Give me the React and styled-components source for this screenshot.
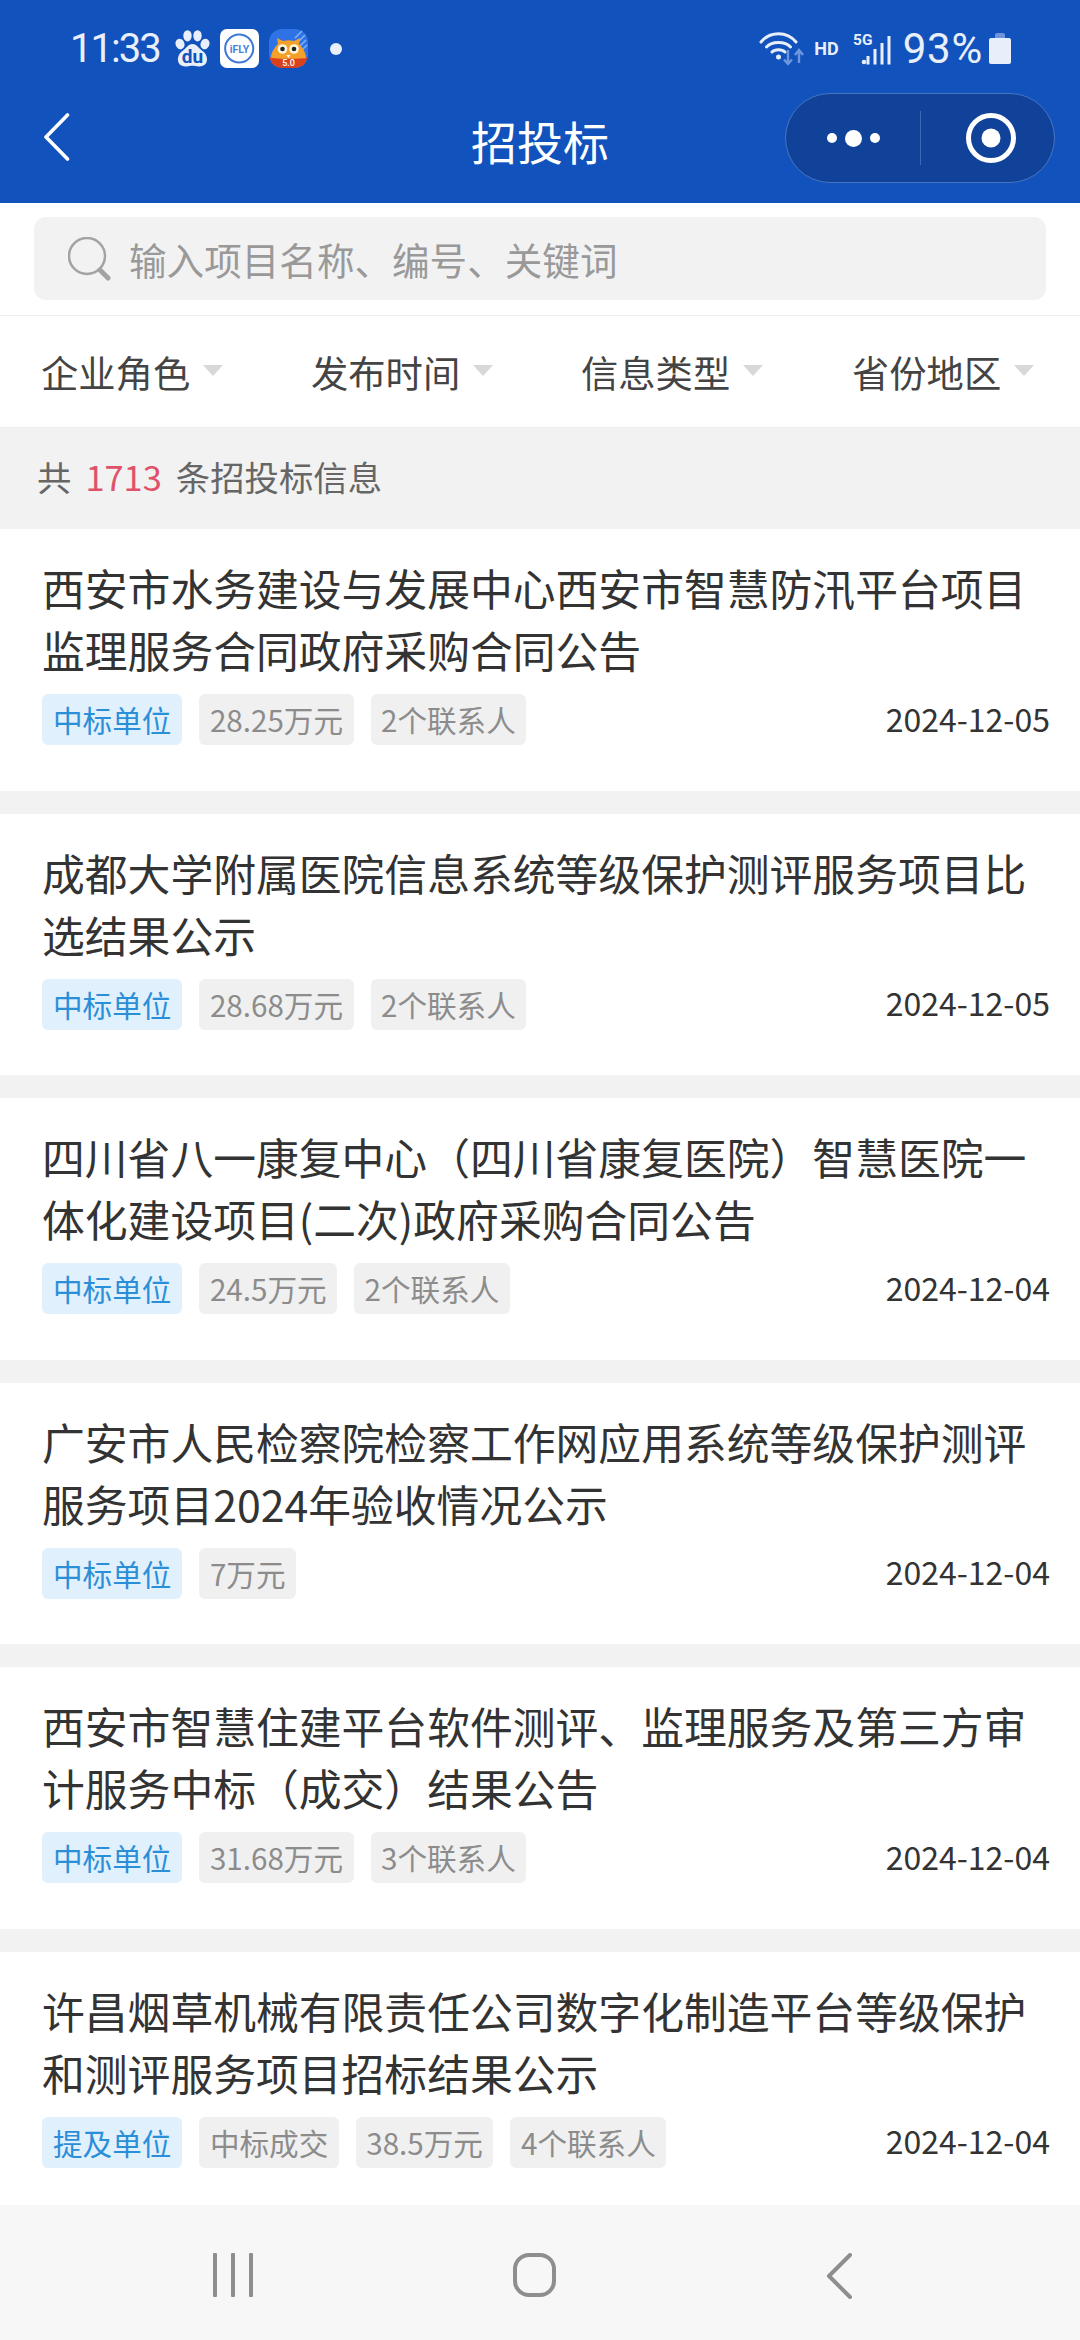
import React from 'react'
import styled, { createGlobalStyle } from 'styled-components'

const GlobalStyle = createGlobalStyle`
    html, body {
        margin: 0;
        padding: 0;
        background: #fff;
    }
    * {
        box-sizing: border-box;
    }
`

const Page = styled.div`
    width: 1080px;
    height: 2340px;
    display: flex;
    flex-direction: column;
    overflow: hidden;
    background: #fff;
    font-family: "Noto Sans CJK SC", "Noto Sans", sans-serif;
`

const Header = styled.header`
    height: 203px;
    flex: none;
    background: #1152bc;
    color: #fff;
`

const StatusBar = styled.div`
    height: 91px;
    padding: 6px 69px 0 70px;
    display: flex;
    align-items: center;
    justify-content: space-between;
    color: #e9effa;
    font-family: Roboto, sans-serif;
`

const StatusGroup = styled.div`
    display: flex;
    align-items: center;
`

const AppIcons = styled.div`
    display: flex;
    align-items: center;
    gap: 10px;
    margin: 0 22px 0 15px;
`

const Clock = styled.span`
    font-size: 40px;
    line-height: 48px;
    letter-spacing: -2px;
`

const Battery = styled.span`
    font-size: 42px;
    line-height: 48px;
    letter-spacing: 0.8px;
    margin: 0 6px 0 11px;
`

const NetworkLabel = styled.span`
    font-size: 18px;
    font-weight: 700;
    margin: 0 14px 0 9px;
`

const StatusDot = styled.span`
    width: 12px;
    height: 12px;
    border-radius: 50%;
    background: #e9effa;
`

const NavBar = styled.div`
    height: 112px;
    padding: 2px 25px 0 44px;
    display: flex;
    align-items: flex-start;
    justify-content: space-between;
    position: relative;
`

const BackButton = styled.div`
    margin-top: 20px;
    line-height: 0;
`

const NavTitle = styled.div`
    position: absolute;
    left: 0;
    right: 0;
    top: 16px;
    text-align: center;
    font-size: 46px;
    line-height: 66px;
`

const Capsule = styled.div`
    width: 270px;
    height: 90px;
    display: flex;
    align-items: center;
    background: #10429a;
    border: 1px solid #4a74c0;
    border-radius: 45px;
`

const CapsuleMenu = styled.div`
    width: 135px;
    height: 54px;
    display: flex;
    align-items: center;
    justify-content: center;
    gap: 8px;
    border-right: 1px solid #3d68b3;
`

const CapsuleClose = styled.div`
    width: 133px;
    padding-left: 6px;
    display: flex;
    align-items: center;
    justify-content: center;
`

const Dot = styled.span`
    width: ${p => p.$size}px;
    height: ${p => p.$size}px;
    border-radius: 50%;
    background: #fff;
`

const SearchRow = styled.div`
    height: 113px;
    flex: none;
    padding: 14px 34px 0 34px;
    border-bottom: 1px solid #eeeeee;
`

const SearchBox = styled.div`
    height: 83px;
    padding-left: 34px;
    display: flex;
    align-items: center;
    gap: 18px;
    background: #f2f2f3;
    border-radius: 12px;
    color: #999;
    font-size: 37.6px;
`

const FilterRow = styled.div`
    height: 112px;
    flex: none;
    display: grid;
    grid-template-columns: 270px 270px 271px 1fr;
    padding-left: 41px;
    border-bottom: 1px solid #eeeeee;
`

const Filter = styled.div`
    display: flex;
    align-items: center;
    gap: 13px;
    color: #444;
    font-size: 37.3px;
`

const Caret = styled.span`
    width: 0;
    height: 0;
    margin-top: -2px;
    border-left: 10px solid transparent;
    border-right: 10px solid transparent;
    border-top: 11px solid #d8d8d8;
`

const CountBar = styled.div`
    height: 101px;
    flex: none;
    padding: 0 0 6px 37px;
    display: flex;
    align-items: center;
    gap: 14px;
    background: #f2f2f3;
    color: #666;
    font-size: 34.4px;
`

const Count = styled.span`
    color: #e0526a;
`

const List = styled.div`
    flex: 1;
    min-height: 0;
    overflow: hidden;
    display: flex;
    flex-direction: column;
    gap: 23px;
    background: #f2f2f3;
`

const Card = styled.div`
    flex: none;
    height: 261.5px;
    padding: 27px 30px 0 42px;
    background: #fff;
`

const CardTitle = styled.div`
    color: #333;
    font-size: 42.8px;
    line-height: 62px;
    height: 124px;
    overflow: hidden;
`

const CardFoot = styled.div`
    margin-top: 14px;
    display: flex;
    align-items: center;
    justify-content: space-between;
`

const Tags = styled.div`
    display: flex;
    gap: 17px;
`

const Tag = styled.span`
    height: 51px;
    padding: 0 ${p => (p.$primary ? 11 : 10.5)}px;
    display: flex;
    align-items: center;
    border-radius: 6px;
    font-size: 29.6px;
    background: ${p => (p.$primary ? '#e1f0fd' : '#f0f0f0')};
    color: ${p => (p.$primary ? '#2b8fd8' : '#8c8c8c')};
`

const PubDate = styled.span`
    margin-top: -4px;
    color: #333;
    font-size: 32px;
`

const BottomNav = styled.div`
    height: 135px;
    flex: none;
    display: grid;
    grid-template-columns: 253px 303px 296px;
    justify-content: start;
    padding-top: 48px;
    background: #f7f7f7;
`

const NavIcon = styled.div`
    line-height: 0;
    justify-self: end;
`

const BaiduIcon = () => (
    <svg width="35" height="37" viewBox="0 0 35 37" fill="#e9effa">
        <ellipse cx="5" cy="14" rx="4.4" ry="5.4" transform="rotate(-20 5 14)" />
        <ellipse cx="12.5" cy="5.8" rx="4.2" ry="5.6" />
        <ellipse cx="22.5" cy="5.8" rx="4.2" ry="5.6" />
        <ellipse cx="30" cy="14" rx="4.4" ry="5.4" transform="rotate(20 30 14)" />
        <path d="M17.500 14c4.500 0 6 4 10 7 6 4 7 15-3 15.500-3 .2-5-.7-7-.7s-4 .9-7 .7c-10-.5-9-11.500-3-15.500 4-3 5.500-7 10-7z" />
        <text x="17.500" y="33" textAnchor="middle" fontSize="19" fontWeight="700" fontFamily="Roboto, sans-serif" fill="#1152bc">du</text>
    </svg>
)

const IflyIcon = () => (
    <svg width="39" height="39" viewBox="0 0 39 39">
        <rect width="39" height="39" rx="7" fill="#fff" />
        <path d="M14 32.500A14 14 0 1 1 19.500 33.500c-2 0-3.500 0-5.500-1" fill="none" stroke="#3f78d8" strokeWidth="2" />
        <text x="19.500" y="23.500" textAnchor="middle" fontSize="10.500" fontWeight="700" fontFamily="Roboto, sans-serif" fill="#4a82dc">iFLY</text>
    </svg>
)

const OwlIcon = () => (
    <svg width="39" height="39" viewBox="0 0 39 39">
        <rect width="39" height="39" rx="13" fill="#2f72e6" />
        <path d="M26 9l7-7M29 13l7-7M31 17l6-6M33 21l5-5" stroke="#7fb0f2" strokeWidth="1.600" />
        <path d="M1 28h37c0 7-6 11-13 11H14C7 39 1 35 1 28z" fill="#d9411e" />
        <path d="M2 29c0-6 4-11 7-14l-1-6 6 3c4-1 7-1 11 0l6-3-1 6c3 3 7 8 7 14-6 1-29 1-35 0z" fill="#f4a12c" />
        <circle cx="13.500" cy="20" r="4.800" fill="#fff6dc" />
        <circle cx="25" cy="20" r="4.800" fill="#fff6dc" />
        <circle cx="13.500" cy="20" r="2.300" fill="#222" />
        <circle cx="25" cy="20" r="2.300" fill="#222" />
        <path d="M17.500 26l2 3 2-3z" fill="#fff" />
        <text x="19.500" y="37" textAnchor="middle" fontSize="9" fontWeight="500" fontFamily="Roboto, sans-serif" fill="#fff">5.0</text>
    </svg>
)

const WifiIcon = () => (
    <svg width="46" height="36" viewBox="0 0 46 36" fill="none">
        <path d="M2 11C11 0 28 0 37 11M7.500 16c5.500-6 18.500-6 24 0M13 21c3-3 10-3 13 0" stroke="#e9effa" strokeWidth="3" strokeLinecap="round" />
        <circle cx="19.500" cy="26" r="2.500" fill="#e9effa" />
        <path d="M29 19v14M25 28.500l4 4.500 4-4.500M40 32V19M36 24l4-5 4 5" stroke="#6f95dc" strokeWidth="2.400" />
    </svg>
)

const SignalIcon = () => (
    <svg width="39" height="36" viewBox="0 0 39 36" fill="#e9effa">
        <text x="0" y="13.500" fontSize="15.500" fontWeight="700" fontFamily="Roboto, sans-serif">5G</text>
        <circle cx="11" cy="31" r="2.300" />
        <rect x="13.500" y="25" width="3" height="8.500" />
        <rect x="20.500" y="18" width="3" height="15.500" />
        <rect x="27.500" y="12" width="3" height="21.500" />
        <rect x="34.500" y="5" width="3" height="28.500" />
    </svg>
)

const BatteryIcon = () => (
    <svg width="22" height="31" viewBox="0 0 22 31">
        <path d="M6 6V2a2 2 0 012-2h6a2 2 0 012 2v4z" fill="#6f95dc" />
        <path d="M2 5h18a2 2 0 012 2v22a2 2 0 01-2 2H2a2 2 0 01-2-2V7a2 2 0 012-2z" fill="#e9effa" />
    </svg>
)

const items = [
    {
        title: '西安市水务建设与发展中心西安市智慧防汛平台项目监理服务合同政府采购合同公告',
        tags: ['28.25万元', '2个联系人'],
        date: '2024-12-05',
    },
    {
        title: '成都大学附属医院信息系统等级保护测评服务项目比选结果公示',
        tags: ['28.68万元', '2个联系人'],
        date: '2024-12-05',
    },
    {
        title: '四川省八一康复中心（四川省康复医院）智慧医院一体化建设项目(二次)政府采购合同公告',
        tags: ['24.5万元', '2个联系人'],
        date: '2024-12-04',
    },
    {
        title: '广安市人民检察院检察工作网应用系统等级保护测评服务项目2024年验收情况公示',
        tags: ['7万元'],
        date: '2024-12-04',
    },
    {
        title: '西安市智慧住建平台软件测评、监理服务及第三方审计服务中标（成交）结果公告',
        tags: ['31.68万元', '3个联系人'],
        date: '2024-12-04',
    },
    {
        title: '许昌烟草机械有限责任公司数字化制造平台等级保护和测评服务项目招标结果公示',
        role: '提及单位',
        tags: ['中标成交', '38.5万元', '4个联系人'],
        date: '2024-12-04',
    },
]

const filters = ['企业角色', '发布时间', '信息类型', '省份地区']

const App = () => {
    return (
        <Page>
            <GlobalStyle />
            <Header>
                <StatusBar>
                    <StatusGroup>
                        <Clock>11:33</Clock>
                        <AppIcons>
                            <BaiduIcon />
                            <IflyIcon />
                            <OwlIcon />
                        </AppIcons>
                        <StatusDot />
                    </StatusGroup>
                    <StatusGroup>
                        <WifiIcon />
                        <NetworkLabel>HD</NetworkLabel>
                        <SignalIcon />
                        <Battery>93%</Battery>
                        <BatteryIcon />
                    </StatusGroup>
                </StatusBar>
                <NavBar>
                    <BackButton>
                        <svg width="26" height="48" viewBox="0 0 26 48" fill="none">
                            <path d="M23.500 2L2 24l21.500 22" stroke="#fff" strokeWidth="3.600" strokeLinecap="round" strokeLinejoin="round" />
                        </svg>
                    </BackButton>
                    <NavTitle>招投标</NavTitle>
                    <Capsule>
                        <CapsuleMenu>
                            <Dot $size={10} />
                            <Dot $size={17} />
                            <Dot $size={10} />
                        </CapsuleMenu>
                        <CapsuleClose>
                            <svg width="50" height="50" viewBox="0 0 50 50" fill="none">
                                <circle cx="25" cy="25" r="22.500" stroke="#fff" strokeWidth="5" />
                                <circle cx="25" cy="25" r="9.500" fill="#fff" />
                            </svg>
                        </CapsuleClose>
                    </Capsule>
                </NavBar>
            </Header>
            <SearchRow>
                <SearchBox>
                    <svg width="43" height="44" viewBox="0 0 43 44" fill="none">
                        <circle cx="19" cy="19" r="18" stroke="#a3a3a3" strokeWidth="2.500" />
                        <path d="M32 33l8 8" stroke="#a3a3a3" strokeWidth="5" strokeLinecap="round" />
                    </svg>
                    输入项目名称、编号、关键词
                </SearchBox>
            </SearchRow>
            <FilterRow>
                {filters.map(name => (
                    <Filter key={name}>
                        {name}
                        <Caret />
                    </Filter>
                ))}
            </FilterRow>
            <CountBar>
                共 <Count>1713</Count> 条招投标信息
            </CountBar>
            <List>
                {items.map(item => (
                    <Card key={item.title}>
                        <CardTitle>{item.title}</CardTitle>
                        <CardFoot>
                            <Tags>
                                <Tag $primary>{item.role || '中标单位'}</Tag>
                                {item.tags.map(tag => (
                                    <Tag key={tag}>{tag}</Tag>
                                ))}
                            </Tags>
                            <PubDate>{item.date}</PubDate>
                        </CardFoot>
                    </Card>
                ))}
            </List>
            <BottomNav>
                <NavIcon>
                    <svg width="40" height="44" viewBox="0 0 40 44" fill="#8e8e8e">
                        <rect x="0" y="0" width="4" height="44" rx="1" />
                        <rect x="18" y="0" width="4" height="44" rx="1" />
                        <rect x="36" y="0" width="4" height="44" rx="1" />
                    </svg>
                </NavIcon>
                <NavIcon>
                    <svg width="43" height="44" viewBox="0 0 43 44" fill="none">
                        <rect x="2" y="2" width="39" height="40" rx="14" stroke="#8e8e8e" strokeWidth="4" />
                    </svg>
                </NavIcon>
                <NavIcon>
                    <svg width="26" height="46" viewBox="0 0 26 46" fill="none">
                        <path d="M24 2L3 23l21 21" stroke="#8e8e8e" strokeWidth="4" strokeLinecap="round" strokeLinejoin="round" />
                    </svg>
                </NavIcon>
            </BottomNav>
        </Page>
    )
}

export default App
